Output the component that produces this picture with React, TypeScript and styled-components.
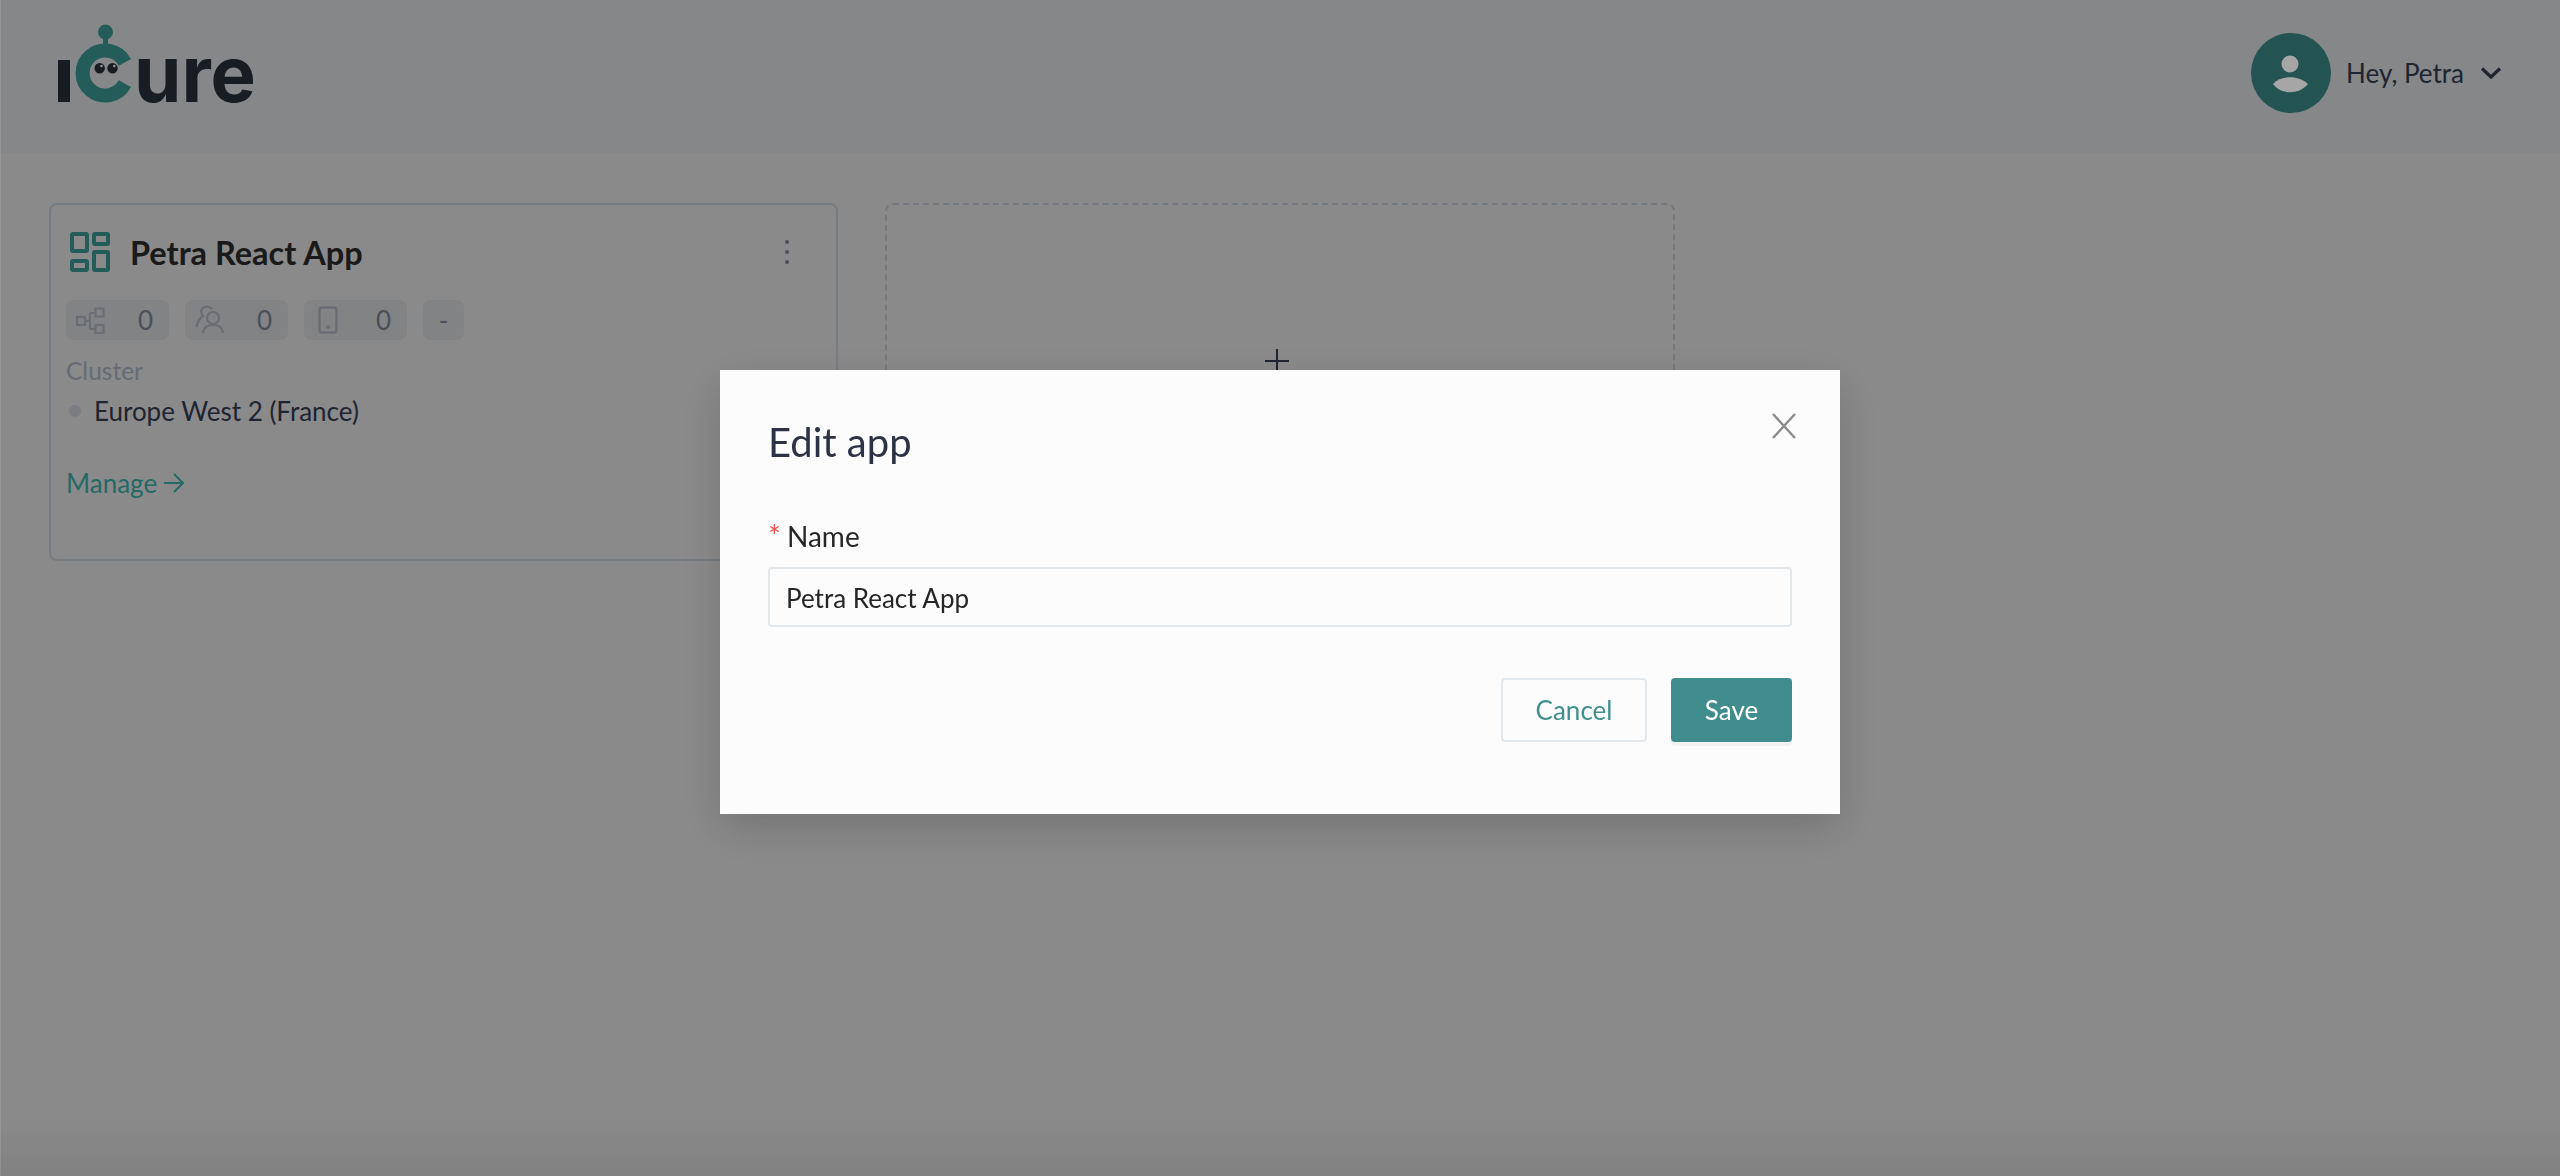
import React from 'react';
import styled, { createGlobalStyle } from 'styled-components';

const GlobalStyle = createGlobalStyle`
  html, body { margin: 0; padding: 0; background: #d4d4d4; }
  body { font-family: "Lato", "Liberation Sans", sans-serif; }
  * { box-sizing: border-box; }
`;

const Page = styled.div`
  width: 2560px;
  height: 1176px;
  overflow: hidden;
  background: #d4d4d4;
`;

const Header = styled.header`
  height: 153px;
  background: #ced0d1;
  display: flex;
  align-items: center;
  justify-content: space-between;
  padding: 0 58px 7px 50px;
`;

const UserMenu = styled.div`
  display: flex;
  align-items: center;
  font-size: 26px;
  color: #30384a;
`;

const UserName = styled.span`
  margin: 0 16px 0 15px;
`;

const Content = styled.main`
  display: grid;
  grid-template-columns: 789px 790px;
  gap: 47px;
  padding: 50px 0 0 49px;
`;

const Card = styled.section`
  height: 358px;
  border: 2px solid #b6c0c8;
  border-radius: 8px;
  padding: 27px 46px 0 15px;
`;

const CardHead = styled.div`
  display: flex;
  align-items: center;
  height: 40px;
  padding-left: 4px;
`;

const CardTitle = styled.h2`
  flex: 1;
  margin: 0 0 0 20px;
  font-size: 32.5px;
  font-weight: 700;
  color: #282828;
`;

const ChipRow = styled.div`
  display: flex;
  gap: 16px;
  margin-top: 28px;
`;

const Chip = styled.div<{ $narrow?: boolean }>`
  width: ${(p) => (p.$narrow ? '41px' : '103px')};
  height: 40px;
  border-radius: 8px;
  background: #c6c9cc;
  color: #747a88;
  font-size: 26px;
  display: flex;
  align-items: center;
  justify-content: ${(p) => (p.$narrow ? 'center' : 'space-between')};
  padding: ${(p) => (p.$narrow ? '0' : '0 16px 0 10px')};
`;

const ClusterLabel = styled.div`
  margin-top: 13px;
  font-size: 24.5px;
  line-height: 36px;
  color: #9da6b4;
`;

const ClusterRow = styled.div`
  display: flex;
  align-items: center;
  margin-top: 2px;
  font-size: 26px;
  line-height: 40px;
  color: #30384a;
`;

const StatusDot = styled.span`
  width: 12px;
  height: 12px;
  border-radius: 50%;
  background: #bcc2cb;
  margin: 0 13px 0 3px;
`;

const ManageLink = styled.a`
  display: flex;
  align-items: center;
  gap: 6px;
  margin-top: 32px;
  font-size: 26px;
  line-height: 40px;
  color: #39a39a;
`;

const AddCard = styled.section`
  height: 358px;
  border: 2px dashed #b2bbc4;
  border-radius: 8px;
  display: flex;
  justify-content: center;
  padding-top: 144px;
  padding-right: 7px;
`;

const Mask = styled.div`
  position: fixed;
  inset: 0;
  background: linear-gradient(to bottom, rgba(0, 0, 0, 0.35) 95%, rgba(0, 0, 0, 0.39) 100%);
  box-shadow: inset 1px 0 0 rgba(255, 255, 255, 0.12);
  display: flex;
  justify-content: center;
  align-items: flex-start;
  padding-top: 370px;
`;

const Modal = styled.div`
  position: relative;
  width: 1120px;
  height: 444px;
  background: #fcfcfd;
  box-shadow: 0 14px 40px rgba(0, 0, 0, 0.16);
  padding: 49px 48px 0 48px;
`;

const ModalTitle = styled.h1`
  margin: 0;
  font-size: 40px;
  line-height: 46px;
  font-weight: 400;
  color: #2d3345;
`;

const CloseButton = styled.button`
  position: absolute;
  top: 43px;
  right: 44px;
  width: 24px;
  height: 26px;
  padding: 0;
  border: 0;
  background: none;
  color: #8c8c8c;
  display: flex;
`;

const FieldLabel = styled.label`
  display: flex;
  align-items: baseline;
  margin-top: 52px;
  font-size: 28px;
  line-height: 38px;
  color: #262626;
`;

const Required = styled.span`
  width: 19px;
  color: #ef5350;
  font-size: 30px;
  line-height: 20px;
`;

const TextField = styled.input`
  display: block;
  width: 100%;
  height: 60px;
  margin-top: 12px;
  padding: 1px 16px 0;
  border: 2px solid #e2e8ec;
  border-radius: 4px;
  outline: none;
  background: transparent;
  font: 400 26px "Lato", "Liberation Sans", sans-serif;
  color: #262626;
`;

const Actions = styled.div`
  display: flex;
  justify-content: flex-end;
  gap: 24px;
  margin-top: 51px;
`;

const Button = styled.button<{ $primary?: boolean }>`
  height: 64px;
  width: ${(p) => (p.$primary ? '121px' : '146px')};
  border-radius: 4px;
  border: 2px solid ${(p) => (p.$primary ? '#418d8e' : '#e2e8ec')};
  background: ${(p) => (p.$primary ? '#418d8e' : 'transparent')};
  color: ${(p) => (p.$primary ? '#ffffff' : '#41908f')};
  box-shadow: ${(p) => (p.$primary ? '0 4px 0 rgba(0, 0, 0, 0.045)' : 'none')};
  font: 400 26px "Lato", "Liberation Sans", sans-serif;
`;

const Logo = () => (
  <svg width="212" height="146" viewBox="50 0 212 146">
    <rect x="58" y="60" width="12" height="42" fill="#252b37" />
    <circle cx="105.5" cy="32" r="7.5" fill="#378e88" />
    <rect x="103" y="38" width="5" height="10" fill="#378e88" />
    <path d="M124.9 62.4A22.5 22.5 0 1 0 124.9 83.6" fill="none" stroke="#378e88" strokeWidth="14" />
    <circle cx="99.7" cy="68.3" r="5.2" fill="#252b37" />
    <circle cx="112.5" cy="68.3" r="5.2" fill="#252b37" />
    <circle cx="101.5" cy="66" r="1.3" fill="#e6e6e6" />
    <circle cx="114.3" cy="66" r="1.3" fill="#e6e6e6" />
    <text
      x="134"
      y="101.5"
      fill="#252b37"
      fontFamily="Inter, sans-serif"
      fontWeight="700"
      fontSize="78"
      textLength="122"
      lengthAdjust="spacingAndGlyphs"
    >
      ure
    </text>
  </svg>
);

const Avatar = () => (
  <svg width="80" height="80" viewBox="0 0 80 80">
    <circle cx="40" cy="40" r="40" fill="#36817d" />
    <circle cx="39" cy="31" r="8.5" fill="#ffffff" />
    <path d="M22 51C30 42 48 42 57 51C48 62 30 62 22 51Z" fill="#ffffff" />
  </svg>
);

const Chevron = () => (
  <svg width="22" height="14" viewBox="0 0 22 14" fill="none" stroke="currentColor" strokeWidth="3.2">
    <path d="M2 2.5L11 11L20 2.5" />
  </svg>
);

const AppIcon = () => (
  <svg width="40" height="40" viewBox="0 0 40 40" fill="none" stroke="#378e88" strokeWidth="4">
    <rect x="2" y="2" width="15" height="17" rx="1" />
    <rect x="24" y="2" width="14" height="10" rx="1" />
    <rect x="2" y="29" width="15" height="9" rx="1" />
    <rect x="24" y="20" width="14" height="18" rx="1" />
  </svg>
);

const Kebab = () => (
  <svg width="6" height="26" viewBox="0 0 6 26" fill="#747a88">
    <circle cx="3" cy="3" r="2" />
    <circle cx="3" cy="13" r="2" />
    <circle cx="3" cy="23" r="2" />
  </svg>
);

const NodesIcon = () => (
  <svg width="30" height="28" viewBox="0 0 30 28" fill="none" stroke="#a4a9b2" strokeWidth="2.2">
    <rect x="1" y="11" width="8" height="8" />
    <rect x="19.5" y="2.5" width="8" height="8" />
    <rect x="19.5" y="19" width="8" height="8" />
    <path d="M9 15H14M14 7V23M14 7H19.5M14 23H19.5" />
  </svg>
);

const UsersIcon = () => (
  <svg width="30" height="30" viewBox="0 0 30 30" fill="none" stroke="#a4a9b2" strokeWidth="2.2">
    <circle cx="18" cy="13" r="6" />
    <path d="M8 28C8.5 22.5 12.5 20 18 20C23.5 20 27.5 22.5 28 28" />
    <path d="M17 4C15 1.5 11 1 8.5 2.5C5.5 4.5 5.5 8 8 11C5 13 2.5 17 1.5 22" />
  </svg>
);

const DeviceIcon = () => (
  <svg width="28" height="28" viewBox="-4 0 28 28" fill="none" stroke="#a4a9b2" strokeWidth="2.4">
    <rect x="1.5" y="1.5" width="17" height="25" rx="2.5" />
    <circle cx="10" cy="21" r="0.8" fill="#a4a9b2" />
  </svg>
);

const ArrowRight = () => (
  <svg width="22" height="22" viewBox="0 0 22 22" fill="none" stroke="currentColor" strokeWidth="2">
    <path d="M1 11H20M11 2L20 11L11 20" />
  </svg>
);

const Plus = () => (
  <svg width="24" height="24" viewBox="0 0 24 24" fill="none" stroke="#30384a" strokeWidth="2">
    <path d="M0 12H24M12 0V24" />
  </svg>
);

const CloseIcon = () => (
  <svg width="24" height="26" viewBox="0 0 24 26" fill="none" stroke="currentColor" strokeWidth="2.4">
    <path d="M1 1L23 25M23 1L1 25" />
  </svg>
);

export default function App() {
  return (
    <Page>
      <GlobalStyle />
      <Header>
        <Logo />
        <UserMenu>
          <Avatar />
          <UserName>Hey, Petra</UserName>
          <Chevron />
        </UserMenu>
      </Header>
      <Content>
        <Card>
          <CardHead>
            <AppIcon />
            <CardTitle>Petra React App</CardTitle>
            <Kebab />
          </CardHead>
          <ChipRow>
            <Chip>
              <NodesIcon />0
            </Chip>
            <Chip>
              <UsersIcon />0
            </Chip>
            <Chip>
              <DeviceIcon />0
            </Chip>
            <Chip $narrow>-</Chip>
          </ChipRow>
          <ClusterLabel>Cluster</ClusterLabel>
          <ClusterRow>
            <StatusDot />
            Europe West 2 (France)
          </ClusterRow>
          <ManageLink>
            Manage <ArrowRight />
          </ManageLink>
        </Card>
        <AddCard>
          <Plus />
        </AddCard>
      </Content>
      <Mask>
        <Modal>
          <ModalTitle>Edit app</ModalTitle>
          <CloseButton aria-label="Close">
            <CloseIcon />
          </CloseButton>
          <FieldLabel>
            <Required>*</Required>
            Name
          </FieldLabel>
          <TextField value="Petra React App" readOnly />
          <Actions>
            <Button>Cancel</Button>
            <Button $primary>Save</Button>
          </Actions>
        </Modal>
      </Mask>
    </Page>
  );
}
